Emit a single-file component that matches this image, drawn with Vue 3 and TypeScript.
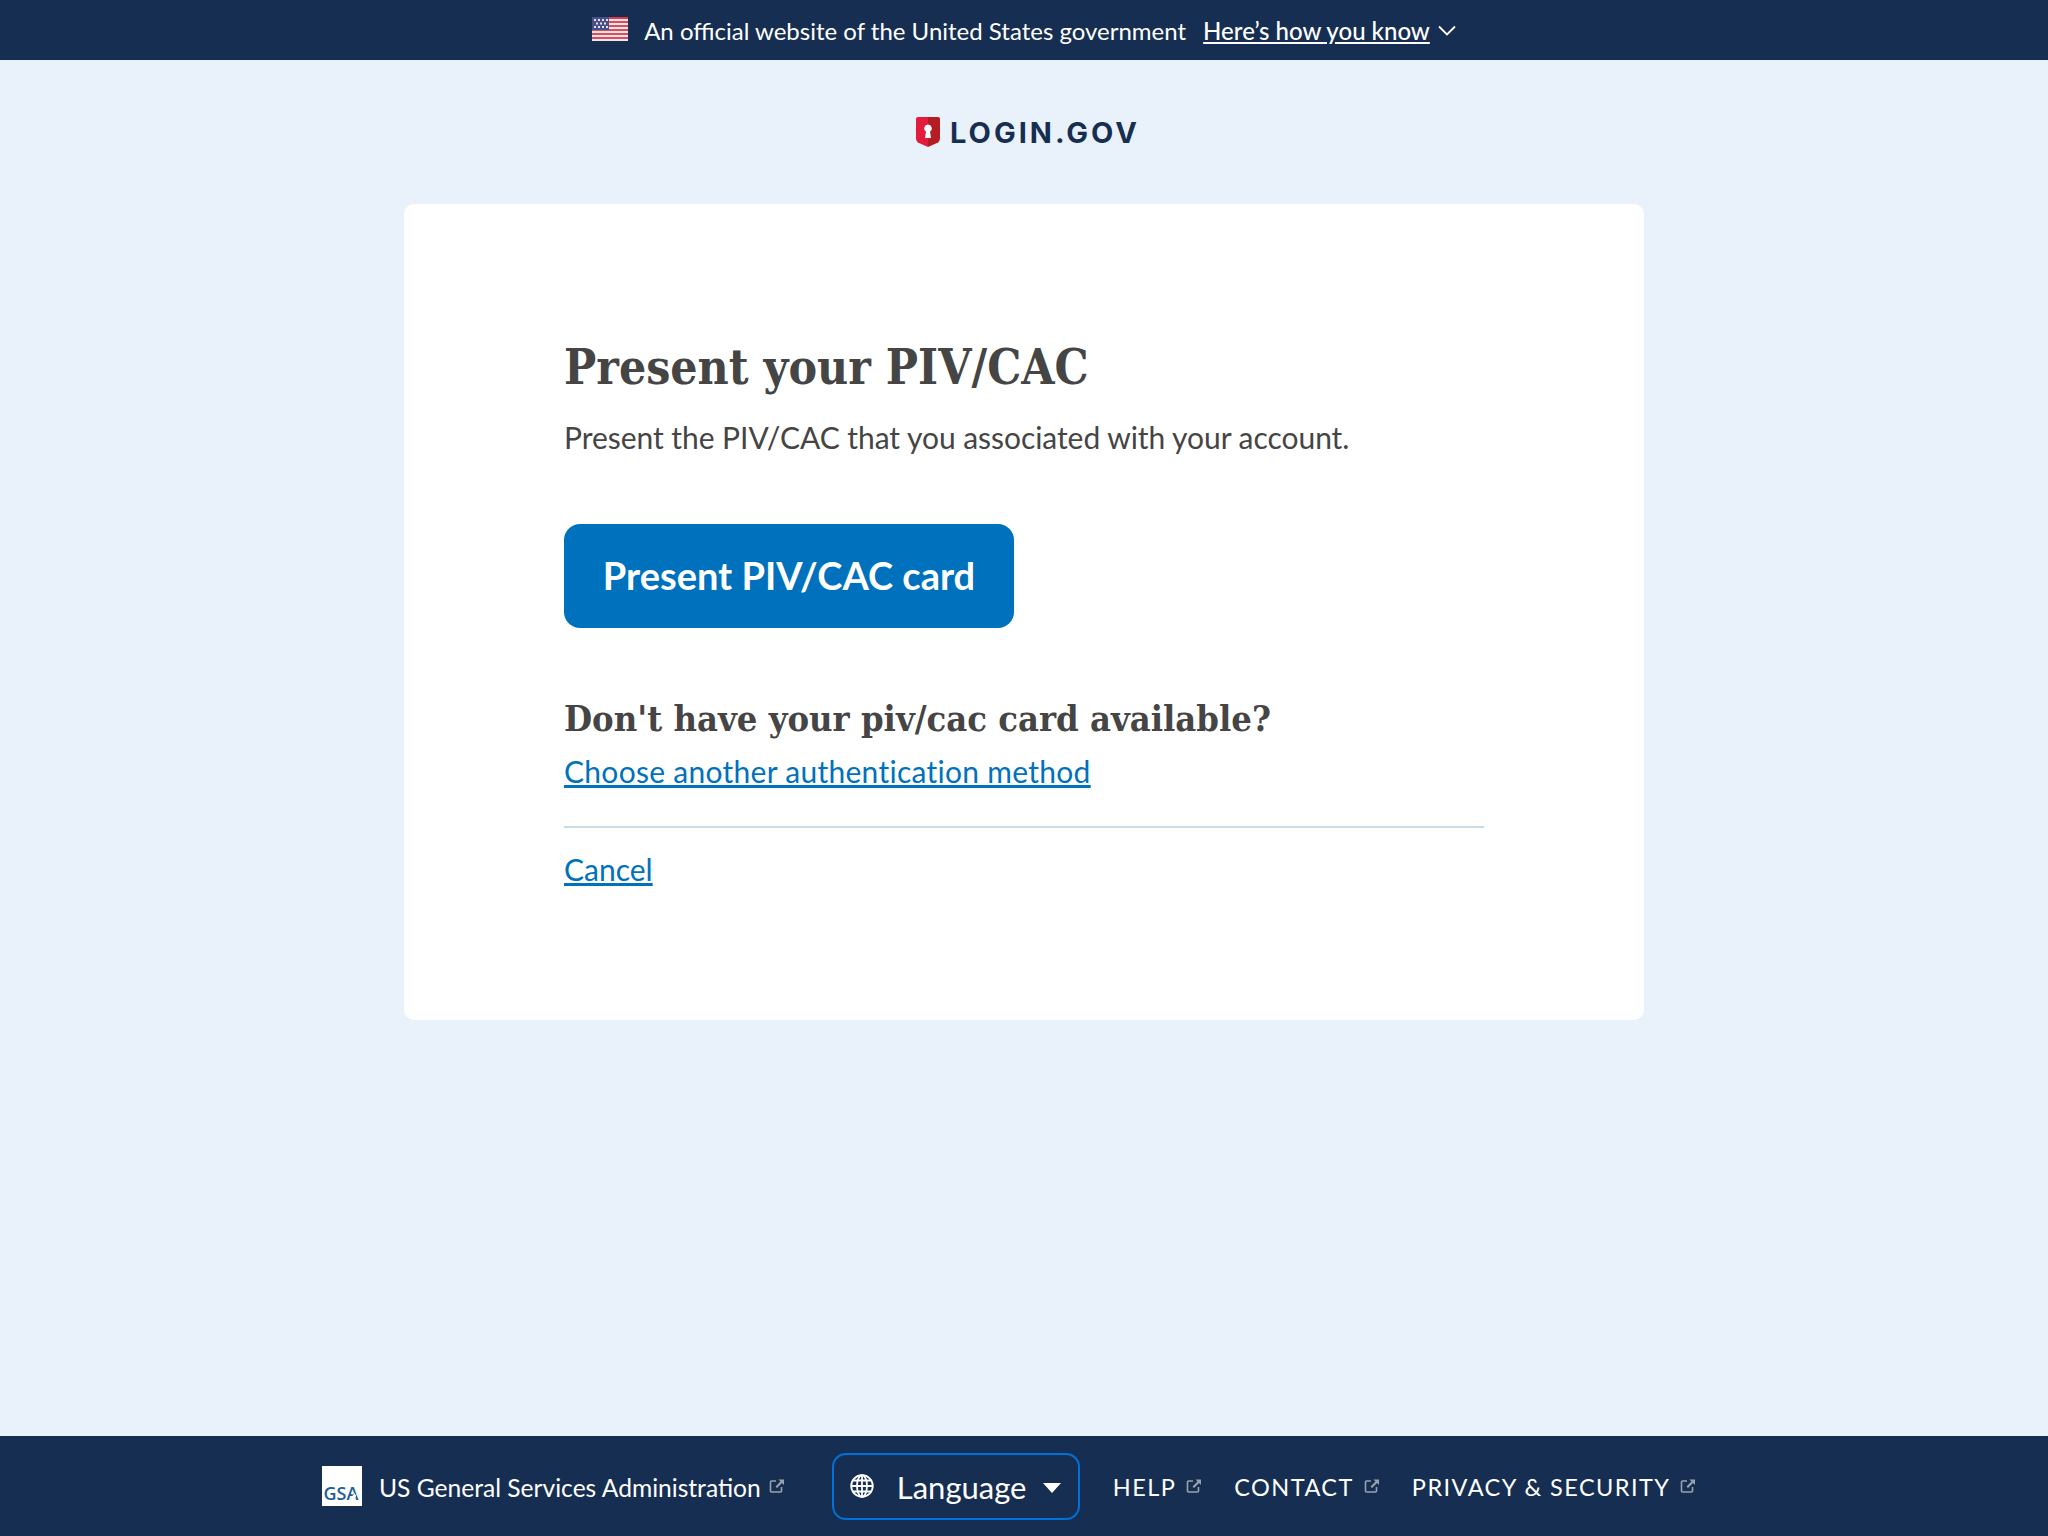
<script setup lang="ts">
const navLinks: string[] = ['HELP', 'CONTACT', 'PRIVACY & SECURITY']
</script>

<template>
  <div class="page">
    <section class="banner">
      <svg class="flag" viewBox="0 0 36 24" width="36" height="24" aria-hidden="true">
        <rect width="36" height="24" fill="#f3e3e3" />
        <rect y="0" width="36" height="2" fill="#d83a4b" />
        <rect y="4" width="36" height="2" fill="#d8505f" />
        <rect y="8" width="36" height="2" fill="#d8505f" />
        <rect y="12" width="36" height="2" fill="#d8505f" />
        <rect y="16" width="36" height="2" fill="#d8505f" />
        <rect y="20" width="36" height="2" fill="#d8505f" />
        <rect y="0" width="17" height="13" fill="#4a4f86" />
        <g fill="#dfe1ee">
          <rect x="2" y="2" width="2" height="2" /><rect x="6" y="2" width="2" height="2" /><rect x="10" y="2" width="2" height="2" /><rect x="14" y="2" width="2" height="2" />
          <rect x="4" y="5.5" width="2" height="2" /><rect x="8" y="5.5" width="2" height="2" /><rect x="12" y="5.5" width="2" height="2" />
          <rect x="2" y="9" width="2" height="2" /><rect x="6" y="9" width="2" height="2" /><rect x="10" y="9" width="2" height="2" /><rect x="14" y="9" width="2" height="2" />
        </g>
      </svg>
      <span class="banner-text">An official website of the United States government</span>
      <a class="banner-link" href="#">Here’s how you know</a>
      <svg class="chevron" viewBox="0 0 18 11" width="18" height="11" aria-hidden="true">
        <path d="M1 1.500 L9 9.500 L17 1.500" fill="none" stroke="#fff" stroke-width="1.800" />
      </svg>
    </section>

    <header class="site-header">
      <svg class="shield" viewBox="0 0 24 30" width="24" height="30" aria-hidden="true">
        <path d="M2 0 H12 V30 L3 26 C1 25 0 23.500 0 21 V2 C0 .8 .8 0 2 0 Z" fill="#e21c3d" />
        <path d="M12 0 H22 C23.200 0 24 .8 24 2 V21 C24 23.500 23 25 21 26 L12 30 Z" fill="#b51d24" />
        <path d="M12 7.500 A3.800 3.800 0 0 1 14 14.500 L15 21 H9 L10 14.500 A3.800 3.800 0 0 1 12 7.500 Z" fill="#fff" />
      </svg>
      <span class="wordmark">LOGIN.GOV</span>
    </header>

    <main class="card">
      <h1>Present your PIV/CAC</h1>
      <p class="lead">Present the PIV/CAC that you associated with your account.</p>
      <button class="primary" type="button">Present PIV/CAC card</button>
      <h2>Don't have your piv/cac card available?</h2>
      <a class="link alt" href="#">Choose another authentication method</a>
      <hr />
      <a class="link cancel" href="#">Cancel</a>
    </main>

    <footer class="footer">
      <svg class="gsa" viewBox="0 0 40 40" width="40" height="40" aria-hidden="true">
        <rect width="40" height="40" fill="#fff" />
        <text x="1.500" y="33.500" class="gsa-text">GSA</text>
        <path d="M32.500 27 L33.300 28.700 L35 28.800 L33.700 29.900 L34.200 31.500 L32.500 30.600 L30.800 31.500 L31.300 29.900 L30 28.800 L31.700 28.700 Z" fill="#fff" />
      </svg>
      <a class="gsa-name" href="#">US General Services Administration</a>
      <svg class="ext" viewBox="0 0 16 16" width="16" height="16" aria-hidden="true">
        <path d="M7 3 H2.500 A1 1 0 0 0 1.500 4 V13 A1 1 0 0 0 2.500 14 H11.500 A1 1 0 0 0 12.500 13 V9" fill="none" stroke="#9aa3ad" stroke-width="1.600" />
        <path d="M9.500 1.500 H15 V7 L13 5 L8 10 L6.500 8.500 L11.500 3.500 Z" fill="#9aa3ad" />
      </svg>

      <button class="language" type="button">
        <svg class="globe" viewBox="0 0 24 24" width="24" height="24" aria-hidden="true">
          <g fill="none" stroke="#fff" stroke-width="1.800">
            <circle cx="12" cy="12" r="10.800" />
            <ellipse cx="12" cy="12" rx="5" ry="10.800" />
            <path d="M12 1.200 V22.800 M1.200 12 H22.800 M2.800 6.500 H21.200 M2.800 17.500 H21.200" />
          </g>
        </svg>
        <span class="language-label">Language</span>
        <svg class="caret" viewBox="0 0 18 10" width="18" height="10" aria-hidden="true">
          <path d="M0 0 H18 L9 10 Z" fill="#fff" />
        </svg>
      </button>

      <nav class="nav">
        <a v-for="item in navLinks" :key="item" class="nav-item" href="#">
          <span>{{ item }}</span>
          <svg class="ext" viewBox="0 0 16 16" width="16" height="16" aria-hidden="true">
            <path d="M7 3 H2.500 A1 1 0 0 0 1.500 4 V13 A1 1 0 0 0 2.500 14 H11.500 A1 1 0 0 0 12.500 13 V9" fill="none" stroke="#9aa3ad" stroke-width="1.600" />
            <path d="M9.500 1.500 H15 V7 L13 5 L8 10 L6.500 8.500 L11.500 3.500 Z" fill="#9aa3ad" />
          </svg>
        </a>
      </nav>
    </footer>
  </div>
</template>

<style>
html, body { margin: 0; background: #e9f2fa; }
</style>

<style scoped>
.page {
  min-height: 1536px;
  display: flex;
  flex-direction: column;
  background: #e9f2fa;
  font-family: Lato, "Noto Sans", sans-serif;
  color: #454545;
}
.banner {
  height: 60px;
  flex: none;
  display: flex;
  align-items: center;
  justify-content: center;
  background: #162e51;
  color: #fff;
  font-size: 24px;
}
.flag { margin-right: 16px; margin-top: -2px; }
.banner-text { margin-right: 17px; }
.banner-link { color: #fff; text-decoration: underline; font-weight: 500; }
.chevron { margin-left: 8px; margin-top: 1px; }
.site-header {
  height: 144px;
  flex: none;
  display: flex;
  align-items: center;
  justify-content: center;
  gap: 10px;
  padding-left: 8px;
  box-sizing: border-box;
}
.wordmark {
  font-family: Inter, sans-serif;
  font-weight: 700;
  font-size: 29px;
  letter-spacing: 3px;
  color: #162e51;
}
.card {
  width: 1240px;
  height: 816px;
  margin: 0 auto;
  box-sizing: border-box;
  padding: 135px 160px 0;
  background: #fff;
  border-radius: 10px;
  display: flex;
  flex-direction: column;
  align-items: flex-start;
}
h1, h2 {
  margin: 0;
  font-family: "DejaVu Serif Condensed", "DejaVu Serif", serif;
  font-weight: 700;
  color: #454545;
}
h1 { font-size: 47.700px; line-height: 56px; }
h2 { font-size: 36px; line-height: 48px; margin-top: 66px; }
.lead { margin: 22px 0 0; font-size: 30px; line-height: 40px; letter-spacing: -.05px; }
.primary {
  margin-top: 67px;
  width: 450px;
  height: 104px;
  padding: 0 0 2px;
  border: 0;
  border-radius: 16px;
  background: #0071bc;
  color: #fff;
  font-family: inherit;
  font-size: 38px;
  font-weight: 700;
}
.link { color: #0071bc; font-size: 30px; line-height: 40px; text-decoration: underline; }
.alt { margin-top: 9px; letter-spacing: .28px; }
hr {
  width: 100%;
  height: 2px;
  margin: 35px 0 0;
  border: 0;
  background: #c8dbeb;
}
.cancel { margin-top: 21px; }
.footer {
  margin-top: auto;
  height: 100px;
  flex: none;
  box-sizing: border-box;
  padding-left: 322px;
  display: flex;
  align-items: center;
  background: #162e51;
  color: #fff;
  font-size: 24.600px;
}
.gsa { flex: none; }
.gsa-text { font-family: "Open Sans", sans-serif; font-size: 18px; font-weight: 600; fill: #1d5e99; }
.gsa-name { margin-left: 17px; padding-top: 2px; color: #fff; text-decoration: none; }
.ext { flex: none; margin-left: 8px; }
.language {
  margin-left: 47px;
  width: 248px;
  height: 67px;
  box-sizing: border-box;
  padding: 0 17px 0 16px;
  display: flex;
  align-items: center;
  border: 2px solid #0071d8;
  border-radius: 14px;
  background: transparent;
  color: #fff;
  font-family: inherit;
  font-size: 31px;
}
.language-label { margin-left: 23px; padding-top: 2px; flex: 1; text-align: left; }
.caret { margin-top: 4px; }
.nav { display: flex; margin-left: 33px; gap: 32px; }
.nav-item {
  display: flex;
  align-items: center;
  color: #fff;
  text-decoration: none;
  font-size: 23.500px;
  letter-spacing: 1.450px;
}
.nav-item span { padding-top: 2px; }
.nav-item .ext { margin-left: 10px; }
</style>
